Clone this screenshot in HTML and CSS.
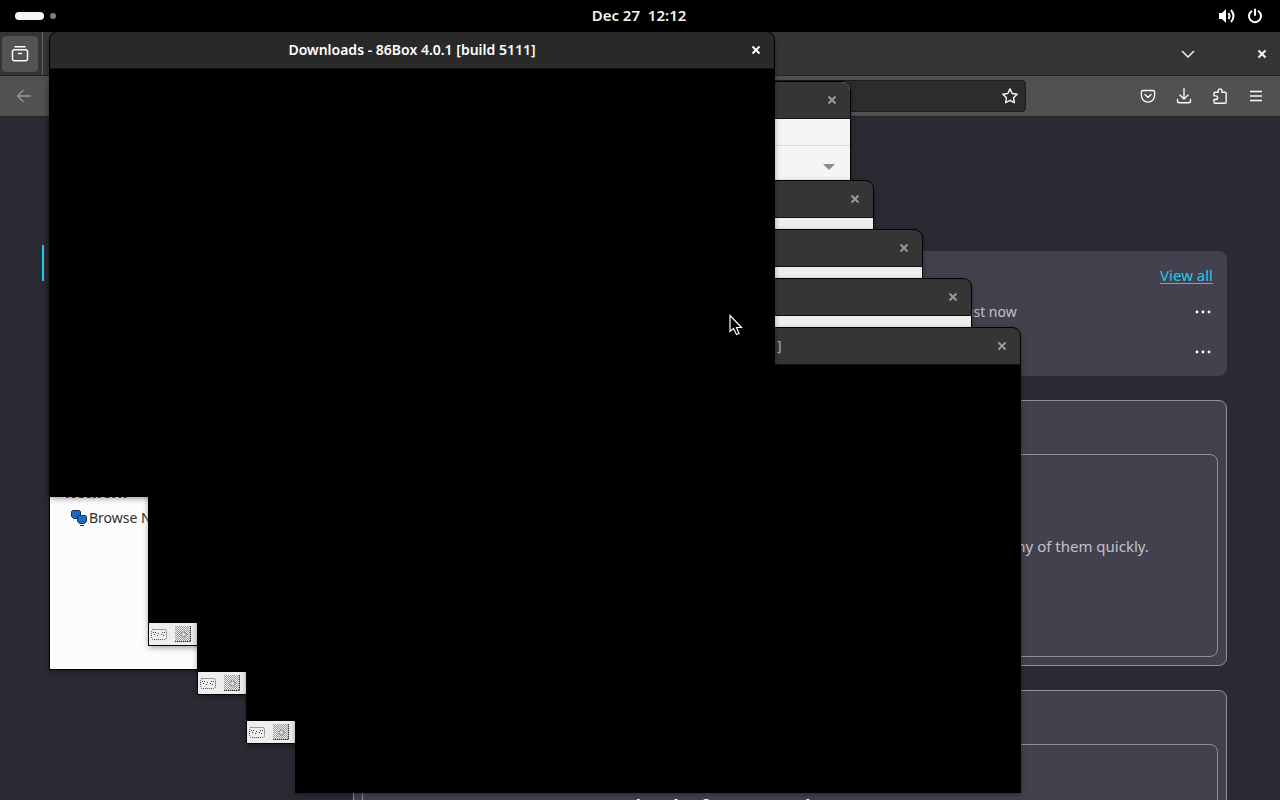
FILE: index.html
```html
<!DOCTYPE html>
<html lang="en">
<head>
<meta charset="utf-8">
<title>Desktop</title>
<link rel="stylesheet" href="styles.css">
</head>
<body>
<svg class="sprites" aria-hidden="true">
  <symbol id="close" viewBox="0 0 10 10"><path d="M1.500 1.500l7 7M8.500 1.500l-7 7" stroke="currentColor" stroke-width="2" fill="none"/></symbol>
  <symbol id="keyboard" viewBox="0 0 16 11"><rect x=".5" y=".5" width="15" height="10" rx="2" fill="#eee" stroke="#444" stroke-dasharray="1 1"/><path d="M2 3.500h3M3 5.500h2M7 4.500h2M11 3.500h3M10 5.500h2M6 6.500h1M12 6.500h1" stroke="#444" stroke-dasharray="1 1"/></symbol>
  <symbol id="disk" viewBox="0 0 16 16"><pattern id="dots" width="2" height="2" patternUnits="userSpaceOnUse"><path d="M0 0h1v1H0zM1 1h1v1H1z" fill="#9a9a9a"/></pattern><rect width="16" height="16" fill="url(#dots)"/><path d="M15.500 0v15.500H0" fill="none" stroke="#333" stroke-dasharray="1 1"/><circle cx="8.500" cy="8.500" r="2.500" fill="#ddd" stroke="#333" stroke-dasharray="1 1"/></symbol>
</svg>

<header class="topbar">
  <button class="workspaces" aria-label="Activities"><span class="pill"></span><span class="dot"></span></button>
  <time class="clock">Dec 27&nbsp; 12:12</time>
  <button class="status" aria-label="System">
    <svg width="18" height="16" viewBox="0 0 18 16" fill="none" stroke="#fff" stroke-width="2"><path d="M1 5h3l4-4v14l-4-4H1z" fill="#fff" stroke="none"/><path d="M10.500 5q2 3 0 6" /><path d="M13 2q5 6 0 12"/></svg>
    <svg width="16" height="16" viewBox="0 0 16 16" fill="none" stroke="#fff" stroke-width="2" stroke-linecap="round"><path d="M4.500 3.300a6 6 0 1 0 7 0M8 1.500v5.500"/></svg>
  </button>
</header>

<main class="desktop">
  <section class="browser" aria-label="Web browser">
    <div class="tabbar">
      <button class="view-tab" aria-label="Browser view"><svg width="18" height="18" viewBox="0 0 18 18" fill="none" stroke="#fbfbfe" stroke-width="1.500" stroke-linecap="round"><path d="M4 1.800h10"/><path d="M3.500 4.800h11q2 0 2 2v7q0 2-2 2h-11q-2 0-2-2v-7q0-2 2-2zM7.500 8.500h3"/></svg></button>
      <span class="divider"></span>
      <button class="list-tabs" aria-label="List tabs"><svg width="14" height="8" viewBox="0 0 14 8" fill="none" stroke="#eee" stroke-width="1.500"><path d="M1 1l6 6 6-6"/></svg></button>
      <button class="quit" aria-label="Close browser"><svg width="10" height="10"><use href="#close"/></svg></button>
    </div>
    <div class="navbar">
      <button class="back" aria-label="Back"><svg width="16" height="14" viewBox="0 0 16 14" fill="none" stroke="#969696" stroke-width="1.300"><path d="M15 7H2M7.500 1L1.500 7l6 6"/></svg></button>
      <div class="address"><button aria-label="Bookmark"><svg width="16" height="16" viewBox="0 0 16 16" fill="none" stroke="#fbfbfe" stroke-width="1.400" stroke-linejoin="round"><path d="M8 .9l2.200 4.600 5 .7-3.700 3.500.9 5L8 12.300l-4.400 2.400.9-5L.8 6.200l5-.7z"/></svg></button></div>
      <div class="tools">
        <button aria-label="Pocket"><svg width="16" height="16" viewBox="0 0 16 16" fill="none" stroke="#fbfbfe" stroke-width="1.400" stroke-linecap="round"><path d="M3 2.500h10q1.600 0 1.600 1.600v3.400a6.600 6.600 0 0 1-13.200 0V4.100q0-1.600 1.600-1.600z"/><path d="M5 6.500l3 3 3-3"/></svg></button>
        <button aria-label="Downloads"><svg width="16" height="16" viewBox="0 0 16 16" fill="none" stroke="#fbfbfe" stroke-width="1.400" stroke-linecap="round"><path d="M8 .8v10M4 7l4 4 4-4M1.500 11.500v1.500q0 1.800 1.800 1.800h9.400q1.800 0 1.800-1.800v-1.500"/></svg></button>
        <button aria-label="Extensions"><svg width="16" height="16" viewBox="0 0 16 16" fill="none" stroke="#fbfbfe" stroke-width="1.400" stroke-linejoin="round"><path d="M2 7.500V5.500q0-1.200 1.200-1.200h3V2.800a1.900 1.900 0 0 1 3.800 0v1.500h3q1.200 0 1.200 1.200v8.600q0 1.200-1.200 1.200H3.200q-1.200 0-1.200-1.200v-2.600h1.800a1.700 1.700 0 0 0 0-3.600H2z"/></svg></button>
        <button aria-label="Menu"><svg width="16" height="12" viewBox="0 0 16 12" stroke="#fbfbfe" stroke-width="1.400"><path d="M2 1.500h12M2 6h12M2 10.500h12"/></svg></button>
      </div>
    </div>
    <div class="page">
      <nav class="side"><span class="marker"></span></nav>
      <div class="cards">
        <section class="card recent">
          <a href="#all">View all</a>
          <div class="row"><span>Just now</span><button aria-label="More"><svg width="16" height="4" viewBox="0 0 16 4" fill="#fff"><circle cx="2" cy="2" r="1.400"/><circle cx="8" cy="2" r="1.400"/><circle cx="14" cy="2" r="1.400"/></svg></button></div>
          <div class="row"><button aria-label="More"><svg width="16" height="4" viewBox="0 0 16 4" fill="#fff"><circle cx="2" cy="2" r="1.400"/><circle cx="8" cy="2" r="1.400"/><circle cx="14" cy="2" r="1.400"/></svg></button></div>
        </section>
        <section class="card outlined"><div class="inner"><p>Here you’ll find the tabs you recently closed, so you can reopen any of them quickly.<br>To find tabs from longer ago, view your history.</p></div></section>
        <section class="card outlined"><div class="inner last"><h2>Grab tabs from anywhere</h2></div></section>
      </div>
    </div>
  </section>

  <section class="window files" aria-label="Files">
    <header class="titlebar"><button aria-label="Close"><svg width="10" height="10"><use href="#close"/></svg></button></header>
    <div class="files-path"></div>
    <div class="files-filter"><svg width="12" height="6" viewBox="0 0 12 6"><path d="M0 0h12L6 6z" fill="#8b8b89"/></svg></div>
    <div class="places"><h3>Network</h3>
      <a href="#network"><svg width="16" height="16" viewBox="0 0 16 16" fill="#1f68c6" stroke="#153153"><path d="M1.500.5h7l1 1v6l-1 1h-6l-2-2v-5z"/><path d="M7.500 5.500h7l1 1v5l-2 2h-5l-2-2v-5zM9 15.500h4"/></svg>Browse Network</a>
    </div>
  </section>

  <section class="window machine first" aria-label="Machine 1">
    <header class="titlebar"><button aria-label="Close"><svg width="10" height="10"><use href="#close"/></svg></button></header>
    <div class="menubar"></div><div class="screen"></div>
    <footer class="statusbar"><svg width="16" height="11"><use href="#keyboard"/></svg><svg width="16" height="16"><use href="#disk"/></svg></footer>
  </section>
  <section class="window machine second" aria-label="Machine 2">
    <header class="titlebar"><button aria-label="Close"><svg width="10" height="10"><use href="#close"/></svg></button></header>
    <div class="menubar"></div><div class="screen"></div>
    <footer class="statusbar"><svg width="16" height="11"><use href="#keyboard"/></svg><svg width="16" height="16"><use href="#disk"/></svg></footer>
  </section>
  <section class="window machine third" aria-label="Machine 3">
    <header class="titlebar"><button aria-label="Close"><svg width="10" height="10"><use href="#close"/></svg></button></header>
    <div class="menubar"></div><div class="screen"></div>
    <footer class="statusbar"><svg width="16" height="11"><use href="#keyboard"/></svg><svg width="16" height="16"><use href="#disk"/></svg></footer>
  </section>
  <section class="window machine fourth" aria-label="Machine 4">
    <header class="titlebar"><h2>Downloads - 86Box 4.0.1 [build 5111]</h2><button aria-label="Close"><svg width="10" height="10"><use href="#close"/></svg></button></header>
    <div class="screen"></div>
  </section>
  <section class="window machine active" aria-label="Machine 5">
    <header class="titlebar"><h2>Downloads - 86Box 4.0.1 [build 5111]</h2><button aria-label="Close"><svg width="10" height="10"><use href="#close"/></svg></button></header>
    <div class="screen"></div>
  </section>
  <svg class="pointer" width="14" height="22" viewBox="0 0 14 22"><path d="M1 1.500v16l3.500-3 3 6 2.500-1-2.500-6h5z" fill="#000" stroke="#fff" stroke-width="1.200"/></svg>
</main>
</body>
</html>
```
FILE: styles.css
```css
* { box-sizing: border-box; }
body {
  margin: 0;
  height: 100vh;
  display: flex;
  flex-direction: column;
  overflow: hidden;
  background: #000;
  font: 15px/20px "Noto Sans", sans-serif;
}
h2, h3, p { margin: 0; }
button {
  display: flex;
  align-items: center;
  justify-content: center;
  padding: 0;
  border: 0;
  background: none;
  color: inherit;
}
svg { display: block; flex: none; }
.sprites { position: absolute; width: 0; height: 0; }

.topbar {
  height: 32px;
  flex: none;
  display: grid;
  grid-template-columns: 1fr auto 1fr;
  align-items: center;
  padding: 0 17px 0 15px;
  color: #f4f4f4;
}
.workspaces { justify-self: start; gap: 6px; }
.pill { width: 29px; height: 8px; border-radius: 4px; background: #f6f6f6; }
.dot { width: 6px; height: 6px; border-radius: 3px; background: #7c7c7c; }
.clock { font-size: 15px; font-weight: 600; padding-bottom: 2px; }
.status { justify-self: end; gap: 11px; }

.desktop { position: relative; flex: 1; min-height: 0; }
.browser { height: 100%; display: flex; flex-direction: column; overflow: hidden; color: #fbfbfe; }
.tabbar {
  height: 44px;
  flex: none;
  display: flex;
  align-items: center;
  padding: 0 13px 0 2px;
  background: #353535;
  border-bottom: 1px solid #242424;
}
.view-tab { width: 36px; height: 36px; border-radius: 4px; background: #535353; }
.divider { width: 1px; height: 100%; margin-left: 4px; background: #666; }
.list-tabs { margin-left: auto; margin-right: 62px; }
.navbar {
  height: 41px;
  flex: none;
  display: flex;
  align-items: center;
  padding: 0 16px;
  background: #515151;
  border-bottom: 1px solid #222;
}
.address {
  flex: 1;
  height: 32px;
  display: flex;
  align-items: center;
  justify-content: flex-end;
  margin: 0 114px 0 200px;
  padding-right: 7px;
  border: 1px solid #1c1c1c;
  border-radius: 4px;
  background: #2c2c2c;
}
.tools { display: flex; align-items: center; gap: 20px; }
.page { flex: 1; min-height: 0; display: flex; background: #2b2a33; }
.side { width: 353px; flex: none; padding: 128px 0 0 42px; }
.marker { display: block; width: 2px; height: 36px; background: #22cbe5; }
.cards { flex: 1; display: flex; flex-direction: column; gap: 24px; padding-top: 134px; margin-right: 53px; }
.card { flex: none; border-radius: 8px; background: #42414d; }
.recent { height: 125px; padding: 14px 14px 0 570px; display: flex; flex-direction: column; }
.recent a { align-self: flex-end; margin-bottom: 7px; color: #22cbe5; text-underline-offset: 2px; }
.row { height: 40px; flex: none; display: flex; align-items: center; color: #c3c2cc; }
.row span { margin-left: 38px; font-size: 14px; }
.row button { margin-left: auto; margin-right: 2px; }
.outlined { padding: 53px 8px 8px; border: 1px solid #8f8f9d; }
.inner {
  height: 203px;
  display: flex;
  align-items: center;
  justify-content: center;
  padding-left: 130px;
  border: 1px solid #8f8f9d;
  border-radius: 8px;
  color: #c3c2cc;
  text-align: center;
}
.last { align-items: flex-start; justify-content: flex-start; padding: 48px 0 0 238px; }
.last h2 { font-size: 20px; line-height: 28px; font-weight: 600; color: #fbfbfe; }

.window {
  position: absolute;
  display: flex;
  flex-direction: column;
  overflow: hidden;
  border-radius: 8px 8px 0 0;
  background: #000;
  box-shadow: 0 0 0 1px #000, 0 2px 6px rgba(0, 0, 0, .45);
}
.titlebar {
  height: 37px;
  flex: none;
  display: flex;
  align-items: center;
  position: relative;
  border-bottom: 1px solid #111;
  background: #353535;
  color: #9a9a9a;
}
.titlebar h2 { flex: 1; text-align: center; font-size: 14px; line-height: 20px; font-weight: 600; }
.titlebar button { position: absolute; right: 13px; width: 10px; height: 10px; }
.screen { flex: 1; background: #000; }
.menubar { height: 22px; flex: none; background: #eee; }
.statusbar { height: 22px; flex: none; display: flex; align-items: center; gap: 8px; padding-left: 2px; background: #eee; }

.machine { width: 724px; height: 464px; }
.active { left: 50px; top: 0; }
.active .titlebar { background: #292929; color: #fff; }
.first { left: 149px; top: 149px; }
.second { left: 198px; top: 198px; }
.third { left: 247px; top: 247px; }
.fourth { left: 296px; top: 296px; }

.files { left: 50px; top: 50px; width: 800px; height: 587px; background: #fcfcfc; color: #303030; }
.files-path { height: 27px; flex: none; background: #f6f5f4; border-bottom: 1px solid #d8d8d8; }
.files-filter { height: 42px; flex: none; display: flex; align-items: center; justify-content: flex-end; padding-right: 15px; background: #f6f5f4; }
.places { margin-top: auto; height: 186px; padding-left: 15px; }
.places h3 { font-size: 14px; line-height: 20px; }
.places a { display: flex; align-items: center; gap: 2px; margin: 5px 0 0 6px; font-size: 14px; color: inherit; text-decoration: none; }
.pointer { position: absolute; left: 729px; top: 282px; }
```
